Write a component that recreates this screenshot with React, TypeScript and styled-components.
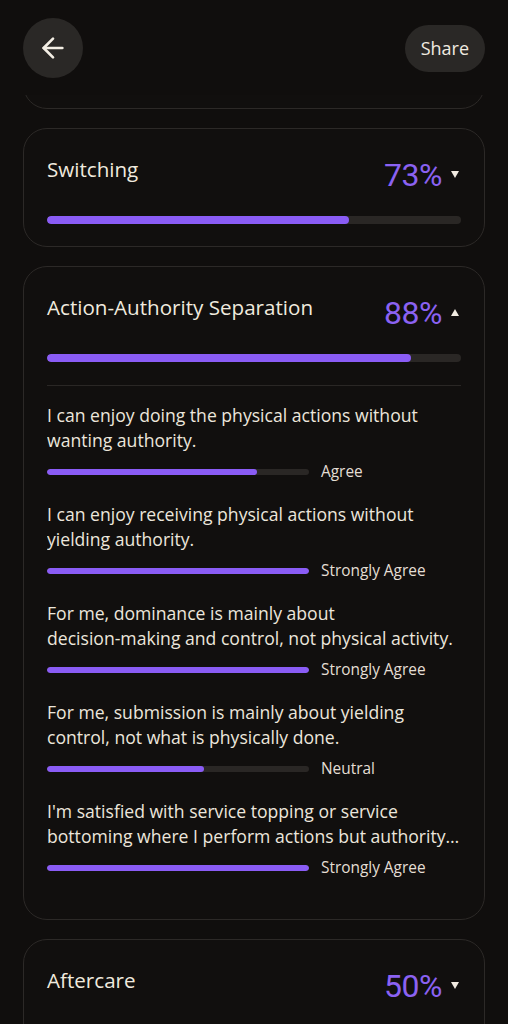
import React from 'react';
import styled, { createGlobalStyle } from 'styled-components';
import { ArrowLeft } from 'lucide-react';

type Statement = { text: React.ReactNode; answer: string; value: number };

type Section = {
  title: string;
  score: number;
  open?: boolean;
  statements?: Statement[];
};

const NoWrap = styled.span`
  white-space: nowrap;
`;

const sections: Section[] = [
  { title: 'Switching', score: 73 },
  {
    title: 'Action-Authority Separation',
    score: 88,
    open: true,
    statements: [
      {
        text: 'I can enjoy doing the physical actions without wanting authority.',
        answer: 'Agree',
        value: 80,
      },
      {
        text: 'I can enjoy receiving physical actions without yielding authority.',
        answer: 'Strongly Agree',
        value: 100,
      },
      {
        text: (
          <>
            For me, dominance is mainly about <NoWrap>decision-making</NoWrap> and
            control, not physical activity.
          </>
        ),
        answer: 'Strongly Agree',
        value: 100,
      },
      {
        text: 'For me, submission is mainly about yielding control, not what is physically done.',
        answer: 'Neutral',
        value: 60,
      },
      {
        text: "I'm satisfied with service topping or service bottoming where I perform actions but authority stays with my partner.",
        answer: 'Strongly Agree',
        value: 100,
      },
    ],
  },
  { title: 'Aftercare', score: 50 },
];

const App = () => {
  return (
    <>
      <GlobalStyle />
      <Page>
        <Header>
          <BackButton aria-label="Back">
            <ArrowLeft size={32} strokeWidth={2} />
          </BackButton>
          <ShareButton>Share</ShareButton>
        </Header>
        <List>
          <TailClip>
            <TailCard />
          </TailClip>
          {sections.map((section) => (
            <Card key={section.title}>
              <CardHead>
                <CardTitle>{section.title}</CardTitle>
                <ScoreWrap>
                  <Score>{section.score}%</Score>
                  <Caret $open={!!section.open} />
                </ScoreWrap>
              </CardHead>
              <Track $height={8}>
                <Fill style={{ width: `${section.score}%` }} />
              </Track>
              {section.open && section.statements && (
                <Details>
                  {section.statements.map((item, i) => (
                    <StatementItem key={i}>
                      <StatementText>{item.text}</StatementText>
                      <Meter>
                        <MeterTrack $height={6}>
                          <Fill style={{ width: `${item.value}%` }} />
                        </MeterTrack>
                        <Answer>{item.answer}</Answer>
                      </Meter>
                    </StatementItem>
                  ))}
                </Details>
              )}
            </Card>
          ))}
        </List>
      </Page>
    </>
  );
};

export default App;

const GlobalStyle = createGlobalStyle`
  html, body {
    margin: 0;
    background: #0f0d0c;
  }
  body {
    font-family: "Open Sans", "Noto Sans", sans-serif;
    color: #eee8de;
  }
  * {
    box-sizing: border-box;
  }
`;

const Page = styled.div`
  width: 508px;
  height: 1024px;
  overflow: hidden;
  padding: 0 23px;
  background: #100e0d;
`;

const Header = styled.header`
  display: flex;
  align-items: center;
  justify-content: space-between;
  height: 60px;
  margin: 18px 0 17px;
`;

const BackButton = styled.button`
  width: 60px;
  height: 60px;
  border: none;
  border-radius: 50%;
  background: #2a2826;
  color: #f3eee4;
  display: flex;
  align-items: center;
  justify-content: center;
  padding: 0;
`;

const ShareButton = styled.button`
  height: 47px;
  padding: 0 16px;
  border: none;
  border-radius: 24px;
  background: #2a2826;
  color: #f1ebe1;
  font-family: "Open Sans", sans-serif;
  font-size: 18px;
`;

const List = styled.div`
  display: flex;
  flex-direction: column;
  gap: 19px;
`;

const TailClip = styled.div`
  height: 14px;
  overflow: hidden;
  display: flex;
  flex-direction: column;
  justify-content: flex-end;
`;

const TailCard = styled.div`
  flex-shrink: 0;
  height: 60px;
  border: 1px solid #2c2927;
  border-radius: 24px;
  background: #110f0e;
`;

const Card = styled.section`
  border: 1px solid #2c2927;
  border-radius: 24px;
  background: #110f0e;
  padding: 26px 23px 22px;
`;

const CardHead = styled.div`
  display: flex;
  align-items: flex-start;
  justify-content: space-between;
  height: 36px;
  margin-bottom: 25px;
`;

const CardTitle = styled.h2`
  margin: 0;
  font-size: 20.6px;
  line-height: 28px;
  font-weight: 400;
  color: #f0eadf;
`;

const ScoreWrap = styled.div`
  display: flex;
  align-items: center;
  gap: 9px;
  height: 36px;
  padding-top: 3px;
`;

const Score = styled.span`
  font-family: Roboto, sans-serif;
  font-size: 32px;
  line-height: 36px;
  color: #8b62f2;
  letter-spacing: -0.5px;
`;

const Caret = styled.span<{ $open: boolean }>`
  width: 0;
  height: 0;
  margin-right: 2px;
  border-left: 4.5px solid transparent;
  border-right: 4.5px solid transparent;
  ${({ $open }) =>
    $open ? 'border-bottom: 7px solid #f1ebe1;' : 'border-top: 7px solid #f1ebe1;'}
`;

const Track = styled.div<{ $height: number }>`
  height: ${({ $height }) => $height}px;
  border-radius: ${({ $height }) => $height / 2}px;
  background: #2a2725;
  overflow: hidden;
`;

const Fill = styled.div`
  height: 100%;
  border-radius: inherit;
  background: #8a5cf5;
`;

const Details = styled.div`
  margin-top: 23px;
  padding-top: 17px;
  padding-bottom: 19px;
  border-top: 1px solid #2a2725;
  display: flex;
  flex-direction: column;
  gap: 20px;
`;

const StatementItem = styled.div`
  display: flex;
  flex-direction: column;
  gap: 9px;
`;

const StatementText = styled.p`
  margin: 0;
  font-size: 17.6px;
  line-height: 25px;
  color: #ece6dc;
  display: -webkit-box;
  -webkit-line-clamp: 2;
  -webkit-box-orient: vertical;
  overflow: hidden;
`;

const Meter = styled.div`
  display: flex;
  align-items: center;
  gap: 12px;
  height: 20px;
`;

const MeterTrack = styled(Track)`
  width: 262px;
  flex-shrink: 0;
`;

const Answer = styled.span`
  font-size: 15.4px;
  line-height: 20px;
  color: #e4ded4;
`;
